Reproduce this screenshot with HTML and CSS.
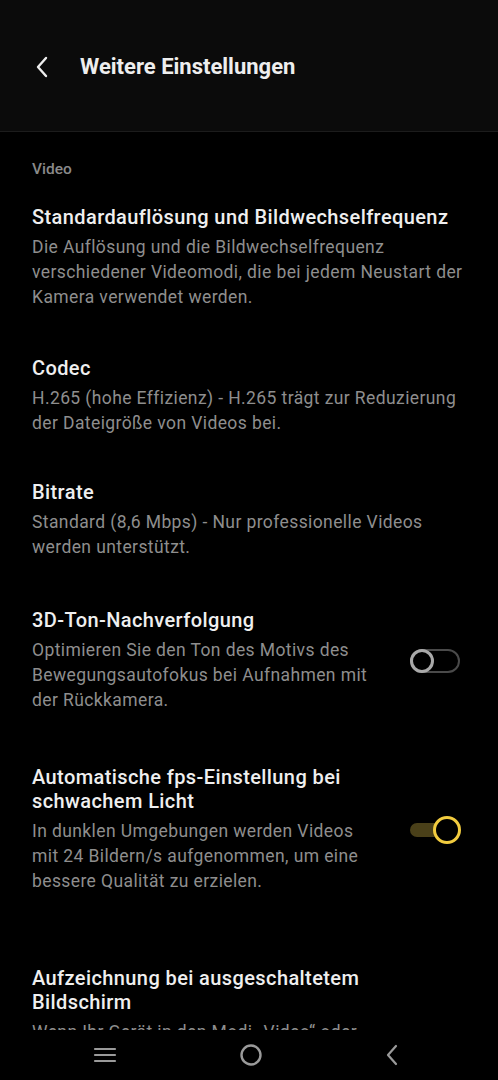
FILE: index.html
```html
<!DOCTYPE html>
<html lang="de">
<head>
    <meta charset="UTF-8">
    <meta name="viewport" content="width=device-width, initial-scale=1.0">
    <title>Weitere Einstellungen</title>
    <link rel="stylesheet" href="styles.css">
</head>
<body>
    <div class="screen">
        <header class="topbar">
            <svg class="back" width="14" height="22" viewBox="0 0 14 22">
                <path d="M11 2 L3 11 L11 20" fill="none" stroke="#eeeeee" stroke-width="2.4" stroke-linecap="round" stroke-linejoin="round"/>
            </svg>
            <h1>Weitere Einstellungen</h1>
        </header>

        <main class="content">
            <div class="section-label">Video</div>

            <div class="item item--first">
                <div class="item-text">
                    <div class="item-title">Standardauflösung und Bildwechselfrequenz</div>
                    <div class="item-desc">Die Auflösung und die Bildwechselfrequenz verschiedener Videomodi, die bei jedem Neustart der Kamera verwendet werden.</div>
                </div>
            </div>

            <div class="item item--codec">
                <div class="item-text">
                    <div class="item-title">Codec</div>
                    <div class="item-desc">H.265 (hohe Effizienz) - H.265 trägt zur Reduzierung der Dateigröße von Videos bei.</div>
                </div>
            </div>

            <div class="item item--tight">
                <div class="item-text">
                    <div class="item-title">Bitrate</div>
                    <div class="item-desc">Standard (8,6 Mbps) - Nur professionelle Videos werden unterstützt.</div>
                </div>
            </div>

            <div class="item">
                <div class="item-text narrow">
                    <div class="item-title">3D-Ton-Nachverfolgung</div>
                    <div class="item-desc">Optimieren Sie den Ton des Motivs des Bewegungsautofokus bei Aufnahmen mit der Rückkamera.</div>
                </div>
                <div class="switch"><span class="knob"></span></div>
            </div>

            <div class="item item--loose">
                <div class="item-text narrow">
                    <div class="item-title">Automatische fps-Einstellung bei schwachem Licht</div>
                    <div class="item-desc">In dunklen Umgebungen werden Videos mit 24 Bildern/s aufgenommen, um eine bessere Qualität zu erzielen.</div>
                </div>
                <div class="switch on"><span class="knob"></span></div>
            </div>

            <div class="item item--wide">
                <div class="item-text narrow">
                    <div class="item-title">Aufzeichnung bei ausgeschaltetem Bildschirm</div>
                    <div class="item-desc">Wenn Ihr Gerät in den Modi „Video“ oder „Zeitlupe“ aufnimmt, können Sie den Bildschirm ausschalten.</div>
                </div>
            </div>
        </main>

        <nav class="navbar">
            <svg width="24" height="18" viewBox="0 0 24 18">
                <path d="M2 3 H22 M2 9 H22 M2 15 H22" stroke="#9a9a9a" stroke-width="2.2" stroke-linecap="round"/>
            </svg>
            <svg width="24" height="24" viewBox="0 0 24 24">
                <circle cx="12" cy="12" r="9.5" fill="none" stroke="#9a9a9a" stroke-width="2.4"/>
            </svg>
            <svg width="16" height="22" viewBox="0 0 16 22">
                <path d="M12 2 L4 11 L12 20" fill="none" stroke="#9a9a9a" stroke-width="2.2" stroke-linecap="round" stroke-linejoin="round"/>
            </svg>
        </nav>
    </div>
</body>
</html>
```

FILE: styles.css
```css
* { box-sizing: border-box; }
body { margin: 0; background: #000; font-family: Roboto, "Noto Sans", sans-serif; color: #eeeeee; }
.screen { width: 498px; height: 1080px; display: flex; flex-direction: column; overflow: hidden; }

.topbar { height: 132px; flex-shrink: 0; background: #0b0b0b; border-bottom: 1px solid #1c1c1c; display: flex; align-items: flex-start; padding: 55px 0 0 35px; }
.back { margin-top: 1px; }
.topbar h1 { margin: 0 0 0 31px; font-size: 22px; font-weight: 700; line-height: 24px; color: #eeeeee; }

.content { flex: 1; overflow: hidden; padding: 27px 32px 0 32px; }
.section-label { font-size: 15.5px; line-height: 20px; color: #8a8a8a; font-weight: 500; }

.item { display: flex; align-items: center; margin-top: 48px; }
.item--first { margin-top: 26px; }
.item--codec { margin-top: 46px; }
.item--tight { margin-top: 44px; }
.item--loose { margin-top: 52px; }
.item--wide { margin-top: 72px; }
.item-text { flex: 1; }
.item-text.narrow { flex: 0 1 348px; }
.item-title { font-size: 20px; font-weight: 500; line-height: 24px; letter-spacing: 0.4px; color: #efefef; }
.item-desc { margin-top: 6px; font-size: 17.5px; line-height: 25px; letter-spacing: 0.4px; color: #8e8e8e; }

.switch { position: relative; width: 50px; height: 24px; margin-left: auto; margin-right: 6px; border: 2px solid #4a4a4a; border-radius: 12px; flex-shrink: 0; }
.switch .knob { position: absolute; left: -2px; top: -2px; width: 24px; height: 24px; border: 3px solid #a9a9a9; border-radius: 50%; background: #000; }
.switch.on { height: 14px; border: none; background: #4a4019; }
.switch.on .knob { left: auto; right: -1px; top: -7px; width: 28px; height: 28px; border-color: #f2cc3f; }

.navbar { height: 50px; flex-shrink: 0; background: #000; display: flex; align-items: center; justify-content: space-between; padding: 0 98px 0 93px; }
```
